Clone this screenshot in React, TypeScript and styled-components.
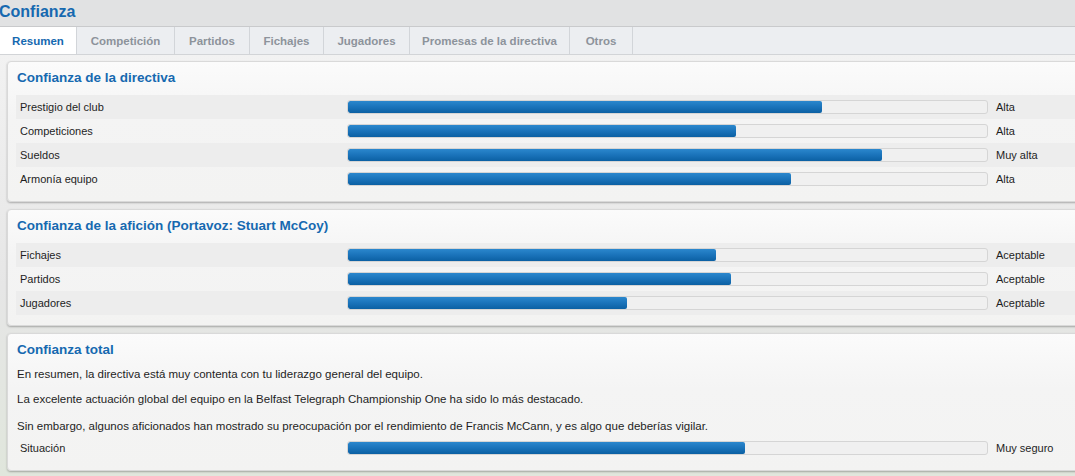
import React from 'react';
import styled, { createGlobalStyle } from 'styled-components';

const GlobalStyle = createGlobalStyle`
  html, body {
    margin: 0;
    padding: 0;
    overflow: hidden;
  }
  body {
    font-family: 'Liberation Sans', Arial, sans-serif;
    background: #e1e2e3;
  }
`;

const Page = styled.div`
  width: 1075px;
  height: 476px;
  overflow: hidden;
  display: flex;
  flex-direction: column;
`;

const Header = styled.div`
  height: 26px;
  background: #e1e2e3;
  display: flex;
  align-items: center;
`;

const PageTitle = styled.h1`
  margin: 0 0 0 -1px;
  font-size: 16px;
  font-weight: bold;
  color: #1669b0;
  line-height: 20px;
  position: relative;
  top: -1px;
`;

const TabBar = styled.nav`
  display: flex;
  height: 27px;
  background: #eceef1;
  border-top: 1px solid #c9cacc;
  border-bottom: 1px solid #d2d4d7;
`;

const Tab = styled.div<{ $active?: boolean; $width: number }>`
  width: ${(p) => p.$width}px;
  display: flex;
  align-items: center;
  justify-content: center;
  font-size: 11.5px;
  font-weight: bold;
  color: ${(p) => (p.$active ? '#1669b0' : '#8d939b')};
  background: ${(p) => (p.$active ? '#ffffff' : 'transparent')};
  border-right: 1px solid #d2d5d9;
`;

const Content = styled.main`
  flex: 1;
  width: 1100px;
  padding: 6px 0 0 7px;
  display: flex;
  flex-direction: column;
  gap: 7px;
  background: linear-gradient(180deg, #f2f2f2 0%, #e6e6e6 55%, #e0e6dc 100%);
`;

const Card = styled.section`
  background: linear-gradient(180deg, #fbfbfb 0%, #f4f4f4 40%, #f3f3f2 100%);
  border: 1px solid #d9d9d9;
  border-radius: 4px;
  box-shadow: 0 1px 2px rgba(0, 0, 0, 0.28);
  padding: 0 0 10px 8px;
`;

const CardTitle = styled.h2`
  margin: 0 0 2px;
  height: 31px;
  line-height: 31px;
  padding-left: 1px;
  font-size: 13.5px;
  font-weight: bold;
  color: #1669b0;
`;

const Rows = styled.div`
  display: flex;
  flex-direction: column;
`;

const Row = styled.div<{ $shade?: boolean }>`
  display: flex;
  align-items: center;
  height: 24px;
  padding-left: 4px;
  background: ${(p) => (p.$shade ? '#ededed' : 'transparent')};
  font-size: 11px;
  color: #1e1e1e;
`;

const Label = styled.span`
  width: 327px;
  flex-shrink: 0;
`;

const Track = styled.div`
  width: 639px;
  height: 12px;
  flex-shrink: 0;
  background: #f0f0f0;
  border: 1px solid #d5d5d5;
  border-radius: 3px;
  overflow: hidden;
`;

const Fill = styled.div`
  height: 100%;
  background: linear-gradient(180deg, #2b87cd 0%, #1a73ba 50%, #0b60a3 100%);
  border-radius: 2px;
`;

const Value = styled.span`
  margin-left: 8px;
`;

const Para = styled.p<{ $gap: number }>`
  margin: 0 0 ${(p) => p.$gap}px;
  padding-left: 1px;
  font-size: 11.5px;
  line-height: 14px;
  color: #1e1e1e;
`;

type Stat = { label: string; pct: number; value: string };

const directiva: Stat[] = [
  { label: 'Prestigio del club', pct: 475 / 641, value: 'Alta' },
  { label: 'Competiciones', pct: 389 / 641, value: 'Alta' },
  { label: 'Sueldos', pct: 536 / 641, value: 'Muy alta' },
  { label: 'Armonía equipo', pct: 444 / 641, value: 'Alta' },
];

const aficion: Stat[] = [
  { label: 'Fichajes', pct: 369 / 641, value: 'Aceptable' },
  { label: 'Partidos', pct: 384 / 641, value: 'Aceptable' },
  { label: 'Jugadores', pct: 280 / 641, value: 'Aceptable' },
];

const tabs = [
  { name: 'Resumen', width: 76 },
  { name: 'Competición', width: 97 },
  { name: 'Partidos', width: 74 },
  { name: 'Fichajes', width: 73 },
  { name: 'Jugadores', width: 85 },
  { name: 'Promesas de la directiva', width: 159 },
  { name: 'Otros', width: 62 },
];

function StatRow({ stat, shade }: { stat: Stat; shade?: boolean }) {
  return (
    <Row $shade={shade}>
      <Label>{stat.label}</Label>
      <Track>
        <Fill style={{ width: `${stat.pct * 100}%` }} />
      </Track>
      <Value>{stat.value}</Value>
    </Row>
  );
}

export default function App() {
  return (
    <Page>
      <GlobalStyle />
      <Header>
        <PageTitle>Confianza</PageTitle>
      </Header>
      <TabBar>
        {tabs.map((t, i) => (
          <Tab key={t.name} $active={i === 0} $width={t.width}>
            {t.name}
          </Tab>
        ))}
      </TabBar>
      <Content>
        <Card>
          <CardTitle>Confianza de la directiva</CardTitle>
          <Rows>
            {directiva.map((s, i) => (
              <StatRow key={s.label} stat={s} shade={i % 2 === 0} />
            ))}
          </Rows>
        </Card>
        <Card>
          <CardTitle>Confianza de la afición (Portavoz: Stuart McCoy)</CardTitle>
          <Rows>
            {aficion.map((s, i) => (
              <StatRow key={s.label} stat={s} shade={i % 2 === 0} />
            ))}
          </Rows>
        </Card>
        <Card>
          <CardTitle>Confianza total</CardTitle>
          <Para $gap={11}>En resumen, la directiva está muy contenta con tu liderazgo general del equipo.</Para>
          <Para $gap={13}>
            La excelente actuación global del equipo en la Belfast Telegraph Championship One ha sido lo más destacado.
          </Para>
          <Para $gap={3}>
            Sin embargo, algunos aficionados han mostrado su preocupación por el rendimiento de Francis McCann, y es algo que deberías vigilar.
          </Para>
          <Rows>
            <StatRow stat={{ label: 'Situación', pct: 398 / 641, value: 'Muy seguro' }} />
          </Rows>
        </Card>
      </Content>
    </Page>
  );
}
